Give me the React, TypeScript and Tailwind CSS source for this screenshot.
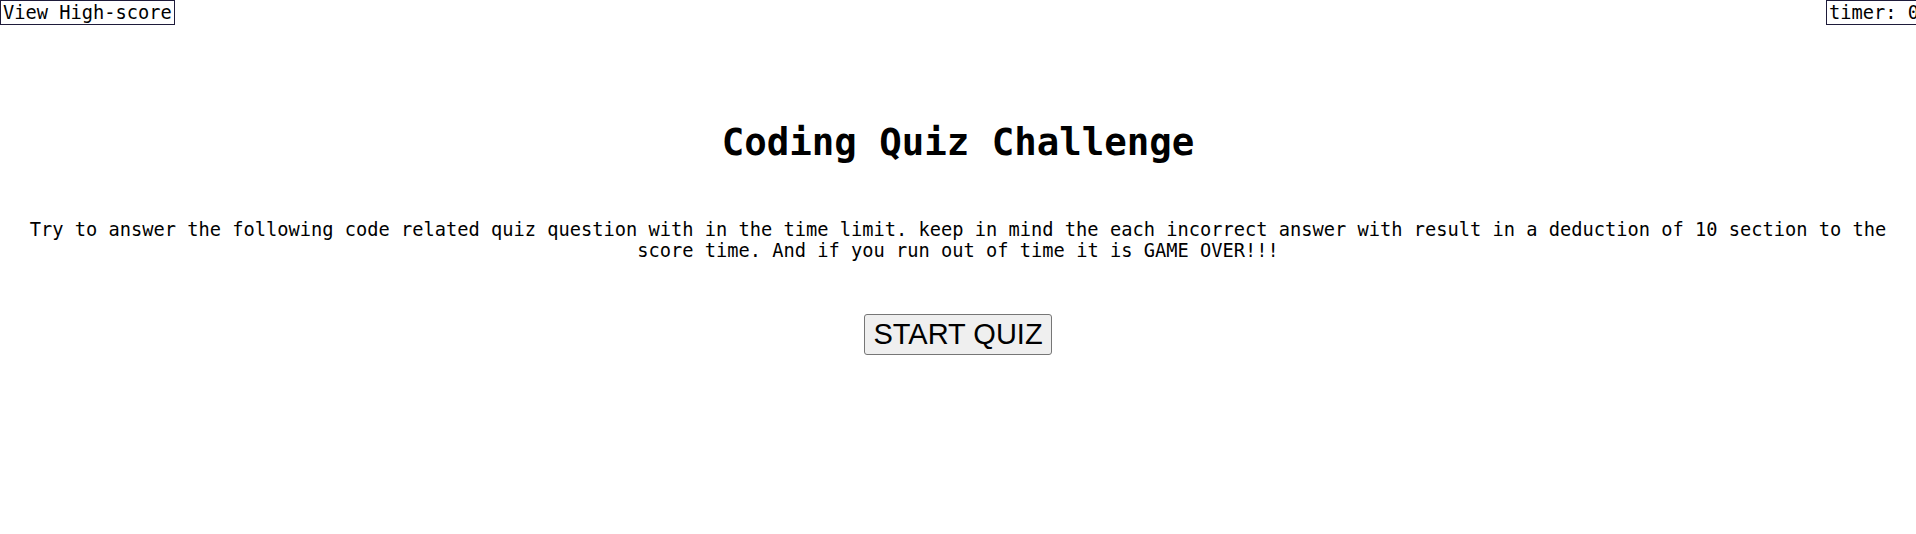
export default function App() {
  return (
    <div className="min-h-[534px] w-full overflow-hidden bg-white text-black font-['DejaVu_Sans_Mono',monospace] text-[18.7px]">
      <header className="flex justify-between whitespace-nowrap">
        <div className="border border-[#1e1b3a] px-0.5 leading-[23px]">View High-score</div>
        <div className="border border-[#1e1b3a] px-0.5 leading-[23px] -mr-[40px] w-[130px]">timer: 0</div>
      </header>

      <main className="flex flex-col items-center text-center px-4">
        <h1 className="mt-[95px] text-[37.4px] font-bold leading-[normal]">Coding Quiz Challenge</h1>
        <p className="mt-[55px] leading-[normal]">
          Try to answer the following code related quiz question with in the time limit. keep in mind the each
          incorrect answer with result in a deduction of 10 section to the score time. And if you run out of time it
          is GAME OVER!!!
        </p>
        <button className="mt-[53px] px-2 py-[3px] bg-[#efefef] border border-[#767676] rounded-[3px] font-['Liberation_Sans',Arial,sans-serif] text-[29px] leading-[normal]">
          START QUIZ
        </button>
      </main>
    </div>
  );
}
